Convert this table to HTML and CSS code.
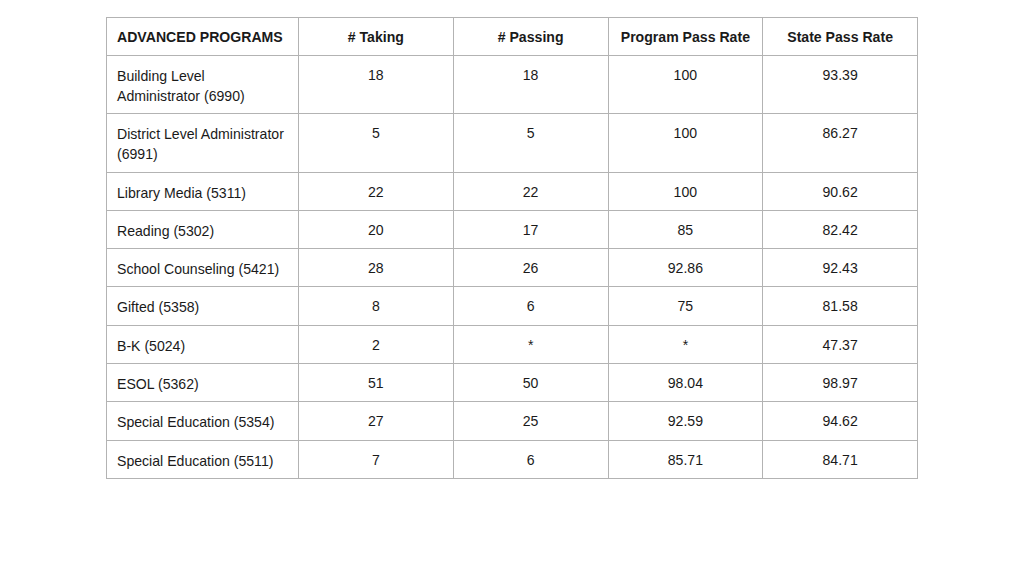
FILE: index.html
```html
<!DOCTYPE html>
<html>
<head>
<meta charset="utf-8">
<link rel="stylesheet" href="styles.css">
</head>
<body>
<table class="results">
  <colgroup>
    <col class="c-name"><col class="c-num"><col class="c-num"><col class="c-num"><col class="c-num">
  </colgroup>
  <thead>
    <tr><th class="name">ADVANCED PROGRAMS</th><th># Taking</th><th># Passing</th><th>Program Pass Rate</th><th>State Pass Rate</th></tr>
  </thead>
  <tbody>
    <tr><td class="name">Building Level<br>Administrator (6990)</td><td>18</td><td>18</td><td>100</td><td>93.39</td></tr>
    <tr><td class="name">District Level Administrator<br>(6991)</td><td>5</td><td>5</td><td>100</td><td>86.27</td></tr>
    <tr><td class="name">Library Media (5311)</td><td>22</td><td>22</td><td>100</td><td>90.62</td></tr>
    <tr><td class="name">Reading (5302)</td><td>20</td><td>17</td><td>85</td><td>82.42</td></tr>
    <tr><td class="name">School Counseling (5421)</td><td>28</td><td>26</td><td>92.86</td><td>92.43</td></tr>
    <tr><td class="name">Gifted (5358)</td><td>8</td><td>6</td><td>75</td><td>81.58</td></tr>
    <tr><td class="name">B-K (5024)</td><td>2</td><td>*</td><td>*</td><td>47.37</td></tr>
    <tr><td class="name">ESOL (5362)</td><td>51</td><td>50</td><td>98.04</td><td>98.97</td></tr>
    <tr><td class="name">Special Education (5354)</td><td>27</td><td>25</td><td>92.59</td><td>94.62</td></tr>
    <tr><td class="name">Special Education (5511)</td><td>7</td><td>6</td><td>85.71</td><td>84.71</td></tr>
  </tbody>
</table>
</body>
</html>
```
FILE: styles.css
```css
html, body {
  margin: 0;
  padding: 0;
  background: #fff;
}
body {
  padding-top: 17px;
  font-family: "Liberation Sans", Arial, sans-serif;
  font-size: 14.1px;
  color: #1a1a1a;
}
.results {
  border-collapse: collapse;
  width: 811px;
  margin: 0 0 0 106px;
  table-layout: fixed;
}
.c-name { width: 192px; }
.c-num { width: 154.75px; }
.results th,
.results td {
  border: 1px solid #b3b3b3;
  line-height: 20px;
  padding: 9px 10px 8.3px 10px;
  vertical-align: top;
  text-align: center;
}
.results th {
  font-weight: bold;
  padding-top: 9px;
  padding-bottom: 8px;
}
.results td.name,
.results th.name {
  text-align: left;
}
.results td.name {
  padding-top: 10px;
  padding-bottom: 7.3px;
}
```
